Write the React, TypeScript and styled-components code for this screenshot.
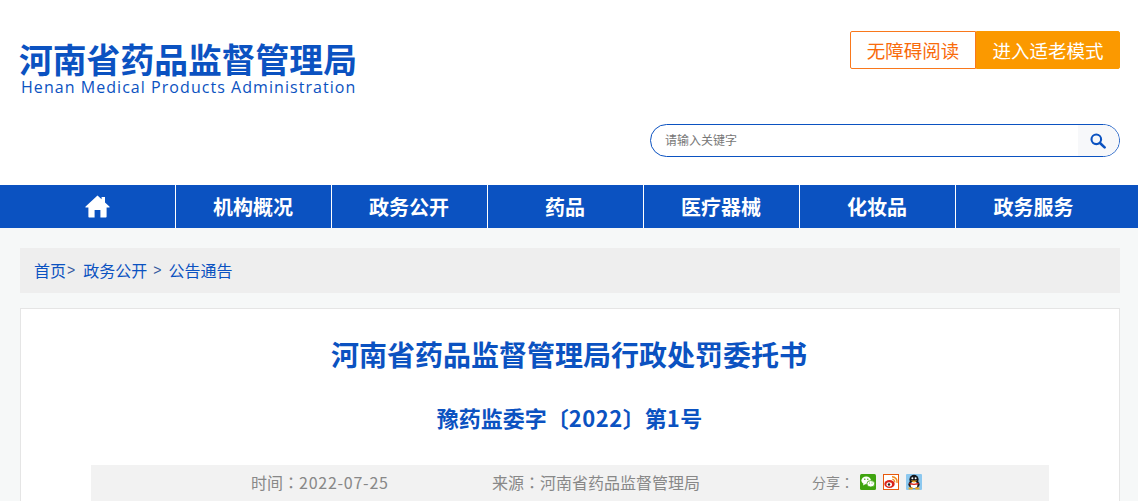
import React from "react";
import styled, { createGlobalStyle } from "styled-components";

const cjk = `"Microsoft YaHei", "Noto Sans CJK SC", sans-serif`;
const blue = "#0b52c1";

const GlobalStyle = createGlobalStyle`
  html, body {
    margin: 0;
    padding: 0;
    height: 100%;
    overflow: hidden;
    background: #f6f8f8;
    font-family: ${cjk};
  }
`;

const Header = styled.header`
  height: 185px;
  background: #fff;
`;

const HeaderInner = styled.div`
  width: 1100px;
  margin-left: 20px;
  display: flex;
  justify-content: space-between;
`;

const Logo = styled.div`
  padding-top: 39px;
  color: ${blue};
`;

const LogoTitle = styled.div`
  font-size: 33.8px;
  font-weight: 700;
  line-height: 40px;
  height: 38px;
  margin-left: -1px;
  white-space: nowrap;
`;

const LogoSub = styled.div`
  font-family: "Open Sans", sans-serif;
  font-size: 16px;
  line-height: 20px;
  letter-spacing: 1.05px;
  margin-left: 1px;
  white-space: nowrap;
`;

const Tools = styled.div`
  width: 470px;
  padding-top: 31px;
  display: flex;
  flex-direction: column;
  align-items: flex-end;
`;

const Modes = styled.div`
  display: flex;
`;

const ModeButton = styled.a<{ $filled?: boolean }>`
  box-sizing: border-box;
  width: ${(p) => (p.$filled ? "144px" : "126px")};
  height: 38px;
  display: flex;
  align-items: center;
  justify-content: center;
  font-size: 18.5px;
  color: ${(p) => (p.$filled ? "#fff" : "#f96b0c")};
  background: ${(p) => (p.$filled ? "#fb9900" : "#fff")};
  border: 1px solid ${(p) => (p.$filled ? "#fb9900" : "#f9781c")};
  border-radius: ${(p) => (p.$filled ? "0 2px 2px 0" : "2px 0 0 2px")};
`;

const Search = styled.div`
  box-sizing: border-box;
  margin-top: 55px;
  width: 470px;
  height: 33px;
  border: 1px solid ${blue};
  border-radius: 16.5px;
  display: flex;
  align-items: center;
  overflow: hidden;
  background: #fff;
`;

const SearchText = styled.span`
  flex: 1;
  padding-left: 14px;
  padding-bottom: 2px;
  font-size: 12px;
  color: #777;
`;

const SearchButton = styled.div`
  box-sizing: border-box;
  width: 41px;
  height: 100%;
  padding-right: 2px;
  background: #f7f8fa;
  display: flex;
  align-items: center;
  justify-content: center;
`;

const Nav = styled.nav`
  height: 43px;
  background: ${blue};
`;

const NavInner = styled.div`
  margin-left: 20px;
  display: flex;
  height: 100%;
`;

const NavItem = styled.a`
  box-sizing: border-box;
  width: 156px;
  height: 100%;
  padding-right: 1px;
  display: flex;
  align-items: center;
  justify-content: center;
  font-size: 20px;
  font-weight: 700;
  color: #fff;
  border-right: 1px solid #fff;
  &:last-child {
    border-right: 0;
  }
`;

const Main = styled.main`
  width: 1100px;
  margin-left: 20px;
  padding-top: 20px;
`;

const Crumbs = styled.div`
  box-sizing: border-box;
  height: 45px;
  background: #eee;
  padding: 0 0 2px 14px;
  display: flex;
  align-items: center;
  font-size: 16px;
  color: ${blue};
`;

const CrumbSep = styled.span<{ $left: number; $right: number }>`
  font-family: "Liberation Sans", sans-serif;
  font-size: 14px;
  color: #33599f;
  margin: 0 ${(p) => p.$right}px 0 ${(p) => p.$left}px;
`;

const Card = styled.section`
  box-sizing: border-box;
  margin-top: 15px;
  height: 400px;
  background: #fff;
  border: 1px solid #e5e5e5;
  padding-top: 25px;
`;

const Title = styled.h1`
  margin: 0;
  padding-right: 2px;
  text-align: center;
  font-size: 28px;
  line-height: 40px;
  font-weight: 700;
  color: ${blue};
`;

const Subtitle = styled.h2`
  margin: 23px 0 0;
  padding-right: 1px;
  text-align: center;
  font-size: 22px;
  line-height: 40px;
  font-weight: 700;
  color: ${blue};
`;

const Digits = styled.span`
  letter-spacing: 0.5px;
`;

const Meta = styled.div`
  box-sizing: border-box;
  margin: 28px 70px 0;
  padding: 0 0 2px 160px;
  height: 36px;
  background: #f2f2f2;
  display: flex;
  align-items: center;
  color: #888;
  font-size: 16px;
`;

const MetaItem = styled.span<{ $width: number }>`
  width: ${(p) => p.$width}px;
  flex: none;
  white-space: nowrap;
`;

const Colon = styled.span`
  font-family: "Noto Sans CJK TC", sans-serif;
`;

const MetaDate = styled.span`
  letter-spacing: 0.75px;
`;

const ShareLabel = styled.span`
  font-size: 14px;
  width: 48px;
  flex: none;
`;

const Share = styled.div`
  display: flex;
  align-items: center;
  gap: 7px;
`;

const ShareIcon = styled.svg`
  width: 16px;
  height: 16px;
  display: block;
`;

const navItems = ["机构概况", "政务公开", "药品", "医疗器械", "化妆品", "政务服务"];

export default function App() {
  return (
    <>
      <GlobalStyle />
      <Header>
        <HeaderInner>
          <Logo>
            <LogoTitle>河南省药品监督管理局</LogoTitle>
            <LogoSub>Henan Medical Products Administration</LogoSub>
          </Logo>
          <Tools>
            <Modes>
              <ModeButton>无障碍阅读</ModeButton>
              <ModeButton $filled>进入适老模式</ModeButton>
            </Modes>
            <Search>
              <SearchText>请输入关键字</SearchText>
              <SearchButton>
                <svg width="16" height="16" viewBox="0 0 16 16" fill="none">
                  <circle cx="6.3" cy="6.3" r="4.8" stroke="#0b52c1" strokeWidth="2.1" />
                  <path d="M10 10 14.6 14.4" stroke="#0b52c1" strokeWidth="2.6" strokeLinecap="round" />
                </svg>
              </SearchButton>
            </Search>
          </Tools>
        </HeaderInner>
      </Header>
      <Nav>
        <NavInner>
          <NavItem>
            <svg width="25" height="23" viewBox="0 0 25 23" fill="#fff">
              <path d="M12.5 0.4 16.6 4.2V2H20V7.4L24.4 11.4C24.9 11.9 24.6 12.6 24 12.6H21.6V21.6C21.6 22.2 21.2 22.6 20.6 22.6H15.4V15H9.6V22.6H4.4C3.8 22.6 3.4 22.2 3.4 21.6V12.6H1C0.4 12.6 0.1 11.9 0.6 11.4Z" />
            </svg>
          </NavItem>
          {navItems.map((item) => (
            <NavItem key={item}>{item}</NavItem>
          ))}
        </NavInner>
      </Nav>
      <Main>
        <Crumbs>
          首页<CrumbSep $left={1} $right={8}>&gt;</CrumbSep>政务公开
          <CrumbSep $left={6} $right={7}>&gt;</CrumbSep>公告通告
        </Crumbs>
        <Card>
          <Title>河南省药品监督管理局行政处罚委托书</Title>
          <Subtitle>
            豫药监委字〔<Digits>2022</Digits>〕第<Digits>1</Digits>号
          </Subtitle>
          <Meta>
            <MetaItem $width={241}>
              时间<Colon>：</Colon>
              <MetaDate>2022-07-25</MetaDate>
            </MetaItem>
            <MetaItem $width={320}>
              来源<Colon>：</Colon>河南省药品监督管理局
            </MetaItem>
            <ShareLabel>
              分享<Colon>：</Colon>
            </ShareLabel>
            <Share>
              <ShareIcon viewBox="0 0 16 16">
                <rect width="16" height="16" rx="1.5" fill="#3fa40f" />
                <ellipse cx="6.2" cy="6.4" rx="4.8" ry="3.9" fill="#fff" />
                <path d="M3.6 9 3 11.4 5.6 10Z" fill="#fff" />
                <ellipse cx="10.8" cy="9.8" rx="3.9" ry="3.2" fill="#fff" stroke="#3fa40f" strokeWidth="0.8" />
                <circle cx="4.8" cy="5.2" r="0.7" fill="#3fa40f" />
                <circle cx="7.8" cy="5.2" r="0.7" fill="#3fa40f" />
                <circle cx="9.5" cy="9" r="0.5" fill="#3fa40f" />
                <circle cx="12" cy="9" r="0.5" fill="#3fa40f" />
              </ShareIcon>
              <ShareIcon viewBox="0 0 16 16">
                <rect x="0.5" y="0.5" width="15" height="15" fill="#fff" stroke="#e8590c" />
                <ellipse cx="6.5" cy="10" rx="5.2" ry="4" fill="#d9241c" />
                <ellipse cx="6.2" cy="10.4" rx="2.8" ry="2.1" fill="#fff" />
                <circle cx="6" cy="10.5" r="1.2" fill="#222" />
                <path d="M9 2.8a5 5 0 0 1 5 6" fill="none" stroke="#f08a1c" strokeWidth="1.5" />
                <path d="M9.3 5.4a2.4 2.4 0 0 1 2.4 3" fill="none" stroke="#f08a1c" strokeWidth="1.2" />
              </ShareIcon>
              <ShareIcon viewBox="0 0 16 16">
                <rect width="16" height="16" rx="1" fill="#8cc8ef" />
                <ellipse cx="8" cy="5.6" rx="4.6" ry="4.9" fill="#15181c" />
                <ellipse cx="8" cy="10.4" rx="5.6" ry="4.2" fill="#15181c" />
                <ellipse cx="8" cy="11" rx="3.4" ry="3.2" fill="#fff" />
                <path d="M4.8 6.6h6.4L8 8.8Z" fill="#f3a81b" />
                <path d="M3.4 8.8c2.8 1.1 6.4 1.1 9.2 0v1.4c-2.8 1.1-6.4 1.1-9.2 0Z" fill="#d9241c" />
                <path d="M2.6 13.4h4.2v2H2.6ZM9.2 13.4h4.2v2H9.2Z" fill="#f3a81b" />
                <circle cx="6.4" cy="4.2" r="1" fill="#fff" />
                <circle cx="9.6" cy="4.2" r="1" fill="#fff" />
              </ShareIcon>
            </Share>
          </Meta>
        </Card>
      </Main>
    </>
  );
}
